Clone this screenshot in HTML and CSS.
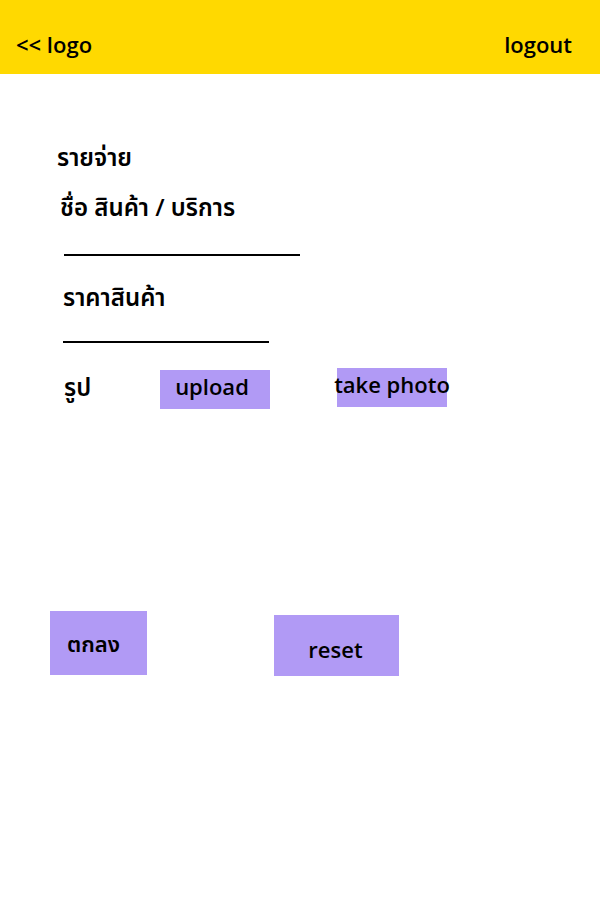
FILE: index.html
```html
<!DOCTYPE html>
<html lang="th">
<head>
<meta charset="utf-8">
<meta name="viewport" content="width=device-width, initial-scale=1">
<title>รายจ่าย</title>
<link rel="stylesheet" href="styles.css">
</head>
<body>
<header class="topbar">
  <a href="#">&lt;&lt; logo</a>
  <a href="#">logout</a>
</header>
<main>
  <form class="expense">
    <h1 class="title">รายจ่าย</h1>
    <div class="field">
      <label for="item">ชื่อ สินค้า / บริการ</label>
      <input class="line" id="item" type="text">
    </div>
    <div class="field price">
      <label for="price">ราคาสินค้า</label>
      <input class="line" id="price" type="text">
    </div>
    <div class="photo">
      <span class="photo-label">รูป</span>
      <button class="small upload" type="button">upload</button>
      <button class="small take" type="button">take photo</button>
    </div>
    <div class="actions">
      <button class="submit" type="submit">ตกลง</button>
      <button class="reset" type="reset">reset</button>
    </div>
  </form>
</main>
</body>
</html>
```
FILE: styles.css
```css
* {
  box-sizing: border-box;
}

body {
  margin: 0;
  background: #fff;
  color: #000;
  font: 600 22px/32px "Open Sans", "Noto Sans Thai", "Noto Sans", sans-serif;
}

a {
  color: inherit;
  text-decoration: none;
}

.topbar {
  display: flex;
  justify-content: space-between;
  padding: 28px 28px 14px 16px;
  background: #ffd900;
}

.expense {
  padding: 67px 50px 0;
}

.title {
  margin: 0 0 18px 7px;
  font: inherit;
  font-size: 24px;
}

.field {
  display: flex;
  flex-direction: column;
  align-items: flex-start;
  margin-left: 10px;
  font-size: 24px;
}

.line {
  width: 236px;
  height: 33px;
  margin-left: 4px;
  padding: 0;
  border: 0;
  border-bottom: 2px solid #000;
  background: transparent;
  font: inherit;
}

.price {
  margin-top: 25px;
  margin-left: 13px;
}

.price .line {
  width: 206px;
  height: 30px;
  margin-left: 0;
}

.photo {
  display: flex;
  align-items: flex-start;
  margin-top: 25px;
}

.photo-label {
  width: 110px;
  padding: 3px 0 0 14px;
  font-size: 24px;
}

button {
  padding: 0;
  border: 0;
  background: #b19af5;
  color: inherit;
  font: inherit;
  white-space: nowrap;
}

.small {
  display: flex;
  justify-content: center;
  width: 110px;
  height: 39px;
}

.upload {
  margin-top: 2px;
  padding-right: 6px;
}

.take {
  margin-left: 67px;
}

.actions {
  display: flex;
  align-items: flex-start;
  margin-top: 202px;
}

.submit {
  width: 97px;
  height: 64px;
  padding-right: 10px;
}

.reset {
  width: 125px;
  height: 61px;
  margin: 4px 0 0 127px;
  padding: 6px 2px 0 0;
}
```
